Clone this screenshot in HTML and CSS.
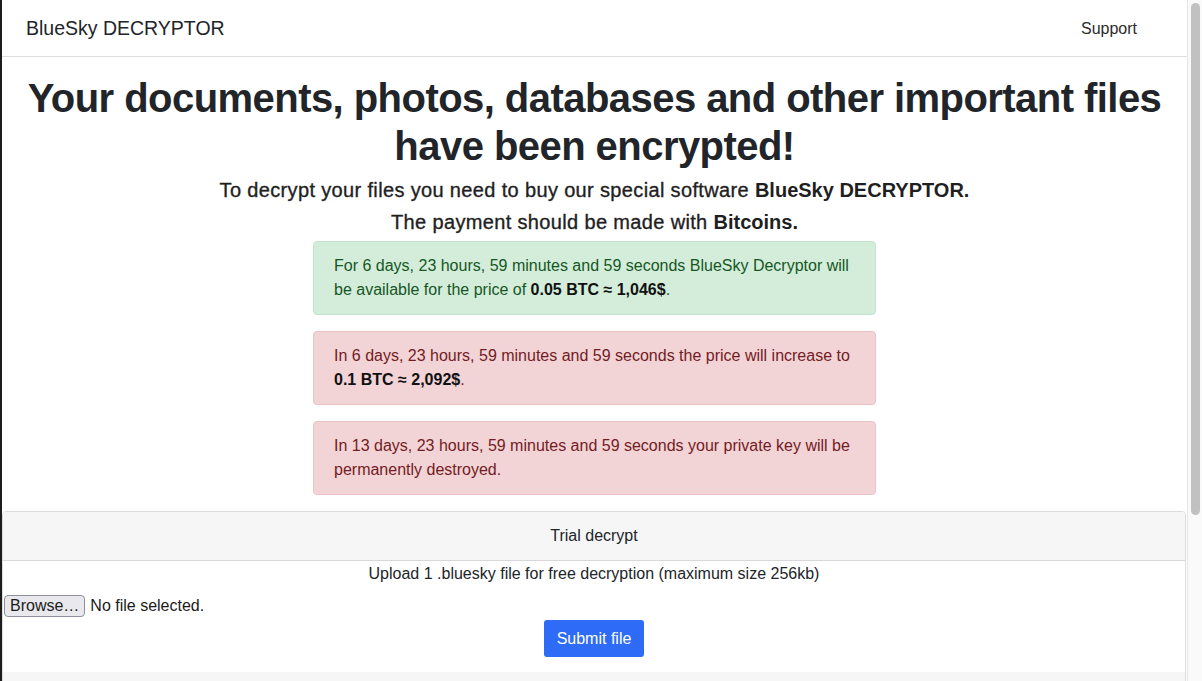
FILE: index.html
```html
<!DOCTYPE html>
<html lang="en">
<head>
<meta charset="utf-8">
<title>BlueSky DECRYPTOR</title>
<link rel="stylesheet" href="styles.css">
</head>
<body>
<div class="page">
  <nav class="navbar">
    <span class="brand">BlueSky DECRYPTOR</span>
    <span class="nav-link">Support</span>
  </nav>
  <main class="content">
    <h1 class="title">Your documents, photos, databases and other important files have been encrypted!</h1>
    <h5 class="sub">To decrypt your files you need to buy our special software <b>BlueSky DECRYPTOR.</b></h5>
    <h5 class="sub sub-last">The payment should be made with <b>Bitcoins.</b></h5>
    <div class="alerts">
      <div class="alert alert-success">For 6 days, 23 hours, 59 minutes and 59 seconds BlueSky Decryptor will be available for the price of <b>0.05&nbsp;BTC&nbsp;≈&nbsp;1,046$</b>.</div>
      <div class="alert alert-danger">In 6 days, 23 hours, 59 minutes and 59 seconds the price will increase to <b>0.1&nbsp;BTC&nbsp;≈&nbsp;2,092$</b>.</div>
      <div class="alert alert-danger">In 13 days, 23 hours, 59 minutes and 59 seconds your private key will be permanently destroyed.</div>
    </div>
    <section class="card">
      <div class="card-header">Trial decrypt</div>
      <div class="card-body">
        <p class="upload-text">Upload 1 .bluesky file for free decryption (maximum size 256kb)</p>
        <div class="file-row">
          <span class="browse">Browse…</span>
          <span class="file-name">No file selected.</span>
        </div>
        <div class="submit-row">
          <span class="btn-primary">Submit file</span>
        </div>
      </div>
      <div class="card-footer"></div>
    </section>
  </main>
</div>
<div class="scrollbar"><div class="thumb"></div></div>
</body>
</html>
```

FILE: styles.css
```css
* { box-sizing: border-box; }
html, body { height: 100%; }
body {
  margin: 0;
  display: flex;
  overflow: hidden;
  font-family: "Liberation Sans", Arial, Helvetica, sans-serif;
  color: #212529;
  background: #fff;
  border-left: 2px solid #1c1c1c;
}
.page {
  flex: 1;
  min-width: 0;
}
.navbar {
  height: 57px;
  display: flex;
  align-items: center;
  justify-content: space-between;
  padding: 0 49px 0 24px;
  border-bottom: 1px solid #dedede;
}
.brand {
  font-size: 19.5px;
  color: #212529;
}
.nav-link {
  font-size: 16px;
  color: #2b2b2b;
  padding-top: 2px;
  padding-right: 1px;
}
.content {
  text-align: center;
}
.title {
  margin: 17px 0 8px;
  font-size: 40px;
  line-height: 48px;
  font-weight: bold;
  letter-spacing: -0.55px;
}
.sub {
  margin: 0 0 8px;
  font-size: 20px;
  line-height: 24px;
  font-weight: 500;
  color: #1f1f1f;
  letter-spacing: 0.35px;
  -webkit-text-stroke: 0.35px #1f1f1f;
}
.sub-last { margin-bottom: 7px; }
.sub b {
  font-weight: bold;
  letter-spacing: 0;
  -webkit-text-stroke: 0;
}
.alerts {
  width: 563px;
  margin: 0 auto;
  text-align: left;
}
.alert {
  padding: 12px 20px;
  margin-bottom: 16px;
  border: 1px solid transparent;
  border-radius: 4px;
  font-size: 16px;
  line-height: 24px;
}
.alert b { color: #111; }
.alert-success {
  background: #d4edda;
  border-color: #c3e6cb;
  color: #155724;
}
.alert-danger {
  background: #f2d3d6;
  border-color: #ebc3c7;
  color: #721c24;
}
.card {
  border: 1px solid #dcdcdc;
  border-radius: 4px;
  margin-right: 1px;
  overflow: hidden;
}
.card-header {
  background: #f6f6f6;
  border-bottom: 1px solid #d8d8d8;
  padding: 12px 20px;
  font-size: 16px;
  line-height: 24px;
}
.card-body {
  padding: 1px 0 15px;
}
.upload-text {
  margin: 0;
  font-size: 16px;
  line-height: 24px;
}
.file-row {
  display: flex;
  align-items: center;
  gap: 5px;
  margin-top: 9px;
  padding-left: 1px;
  text-align: left;
  font-size: 16px;
}
.browse {
  display: inline-block;
  background: #e9e9ed;
  border: 1px solid #8f8f9d;
  border-radius: 4px;
  padding: 1px 5px;
  font-size: 16px;
  line-height: 18px;
  color: #1b1b1b;
}
.file-name { color: #1b1b1b; }
.submit-row {
  margin-top: 3px;
}
.btn-primary {
  display: inline-block;
  background: #2e6bf6;
  color: #fff;
  border-radius: 3px;
  padding: 6px 13px;
  font-size: 16px;
  line-height: 25px;
}
.card-footer {
  height: 20px;
  background: #f6f6f6;
}
.scrollbar {
  width: 15px;
  flex: none;
  background: #fafafa;
  border-left: 1px solid #e6e6e6;
  padding: 3px 2px 0 2px;
}
.thumb {
  width: 9px;
  height: 512px;
  margin: 0 auto;
  background: #c1c1c1;
  border-radius: 5px;
}
```
